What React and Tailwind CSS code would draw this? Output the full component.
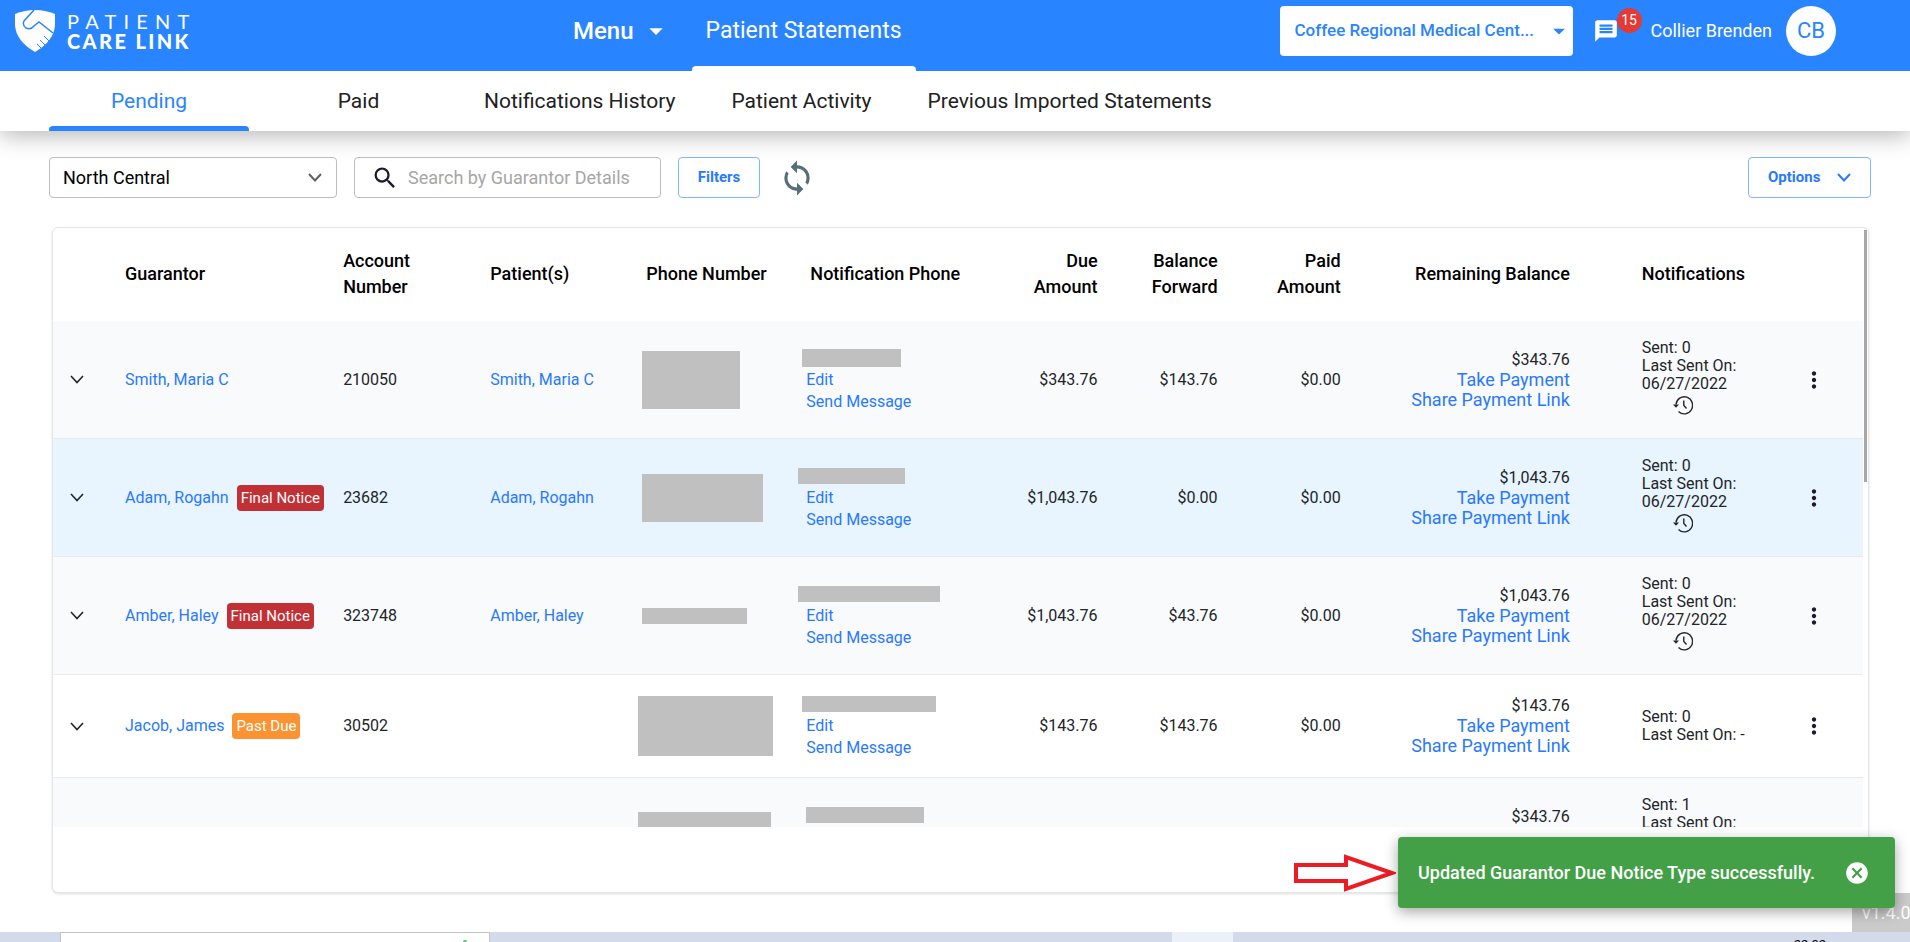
import { useState } from 'react';
import { MdArrowDropDown, MdCancel, MdMessage, MdMoreVert, MdSearch, MdSync } from 'react-icons/md';

const TABS = [
  { name: 'Pending', width: 'w-[200px]' },
  { name: 'Paid', width: 'ml-3 w-[195px]' },
  { name: 'Notifications History', width: 'px-7' },
  { name: 'Patient Activity', width: 'px-7' },
  { name: 'Previous Imported Statements', width: 'px-7' },
];

const ROWS = [
  {
    id: 1,
    guarantor: 'Smith, Maria C',
    account: '210050',
    patient: 'Smith, Maria C',
    phoneMask: 'w-[98px] h-[58px]',
    notifyMask: '-ml-1 w-[99px] h-[18px]',
    due: '$343.76',
    forward: '$143.76',
    paid: '$0.00',
    remaining: '$343.76',
    sent: 0,
    lastSent: '06/27/2022',
    rowClass: 'bg-[#f9fafc]',
  },
  {
    id: 2,
    guarantor: 'Adam, Rogahn',
    notice: 'Final Notice',
    account: '23682',
    patient: 'Adam, Rogahn',
    phoneMask: 'w-[121px] h-12',
    notifyMask: '-ml-2 w-[107px] h-4',
    due: '$1,043.76',
    forward: '$0.00',
    paid: '$0.00',
    remaining: '$1,043.76',
    sent: 0,
    lastSent: '06/27/2022',
    rowClass: 'bg-[#e8f4fe]',
  },
  {
    id: 3,
    guarantor: 'Amber, Haley',
    notice: 'Final Notice',
    account: '323748',
    patient: 'Amber, Haley',
    phoneMask: 'w-[105px] h-4',
    notifyMask: '-ml-2 w-[142px] h-4',
    due: '$1,043.76',
    forward: '$43.76',
    paid: '$0.00',
    remaining: '$1,043.76',
    sent: 0,
    lastSent: '06/27/2022',
    rowClass: 'bg-[#f9fafc]',
  },
  {
    id: 4,
    guarantor: 'Jacob, James',
    notice: 'Past Due',
    account: '30502',
    patient: '',
    phoneMask: '-ml-1 w-[135px] h-[60px]',
    notifyMask: '-ml-1 w-[134px] h-4',
    due: '$143.76',
    forward: '$143.76',
    paid: '$0.00',
    remaining: '$143.76',
    sent: 0,
    lastSent: null,
    rowClass: 'bg-white',
  },
  {
    id: 5,
    account: '',
    patient: '',
    phoneMask: '-ml-1 w-[133px] h-[50px]',
    notifyMask: 'w-[118px] h-4',
    due: '',
    forward: '',
    paid: '',
    remaining: '$343.76',
    sent: 1,
    lastSent: '06/27/2022',
    rowClass: 'bg-[#f9fafc]',
  },
];

function Logo() {
  return (
    <a href="#home" aria-label="Patient Care Link" className="flex items-center gap-3 text-white">
      <svg viewBox="0 0 40 42" className="h-[42px] w-10">
        <path d="M0 4 Q10 0 20 0 Q30 0 40 4 L40 15 Q39 31 20 42 Q1 31 0 15 Z" fill="#fff" />
        <path
          d="M19 0 L9 11 Q7 15 11 18 Q16 20 19 16 L24 12 L38 23"
          fill="none"
          stroke="#2984ff"
          strokeWidth="1.5"
        />
        <path d="M29 26 L34 31 M25 30 L30 35 M22 34 L26 38" stroke="#2984ff" strokeWidth="1" />
      </svg>
      <span className="flex flex-col whitespace-nowrap font-[Lato,sans-serif] text-xl leading-5">
        <span className="tracking-[0.36em]">PATIENT</span>
        <span className="font-black tracking-[0.12em]">CARE LINK</span>
      </span>
    </a>
  );
}

function Chevron({ className, strokeWidth = 2 }) {
  return (
    <svg viewBox="0 0 14 9" className={className} fill="none" stroke="currentColor" strokeWidth={strokeWidth}>
      <path d="M1 1 L7 7.5 L13 1" />
    </svg>
  );
}

function HistoryIcon() {
  return (
    <svg viewBox="0 0 20 20" className="size-5" fill="none" stroke="#212529" strokeWidth="1.4">
      <path d="M3 9.5 A8.3 8.6 0 1 1 5.5 16.5" />
      <path d="M10.8 5.5 V10.5 L13.5 13.5" />
      <path d="M0 9.5 H6 L3 12.8 Z" fill="#212529" stroke="none" />
    </svg>
  );
}

function TopBar() {
  return (
    <header className="relative z-10 flex h-[71px] bg-[#2984ff] text-white">
      <div className="w-[573px] shrink-0 pl-[15px] pt-[10px]">
        <Logo />
      </div>
      <nav className="flex">
        <button type="button" className="flex h-[61px] items-center gap-1.5 text-2xl font-medium">
          Menu
          <MdArrowDropDown className="size-8" />
        </button>
        <a href="#statements" className="ml-5 flex flex-col px-[14px] text-[23px]">
          <span className="flex h-[66px] items-center pb-1">Patient Statements</span>
          <span className="-mx-[14px] h-[5px] rounded-t bg-white" />
        </a>
      </nav>
      <div className="ml-auto flex h-[61px] items-center pr-[74px]">
        <div className="relative flex items-center text-[#2984ff]">
          <select
            aria-label="Facility"
            className="h-[50px] w-[293px] appearance-none rounded bg-white pl-[15px] pr-6 text-[17px] font-medium"
          >
            <option>Coffee Regional Medical Cent...</option>
          </select>
          <MdArrowDropDown className="pointer-events-none absolute right-0 size-7" />
        </div>
        <button type="button" aria-label="Messages" className="relative ml-5">
          <MdMessage className="size-[26px]" />
          <span className="absolute -top-2.5 left-6 flex size-[25px] items-center justify-center rounded-full bg-[#e53935] text-sm">
            15
          </span>
        </button>
        <span className="ml-8 text-lg">Collier Brenden</span>
        <button type="button" className="ml-[14px] size-[50px] rounded-full bg-white text-[22px] text-[#2984ff]">
          CB
        </button>
      </div>
    </header>
  );
}

function TabBar({ active, onChange }) {
  return (
    <nav className="relative flex h-[60px] bg-white pl-[49px] shadow-[0_4px_24px_rgba(0,0,0,0.3)]">
      {TABS.map(({ name, width }) => (
        <button
          key={name}
          type="button"
          onClick={() => onChange(name)}
          className={`flex flex-col items-center text-[21px] ${width} ${
            name === active ? 'text-[#2984ff]' : 'text-[#212121]'
          }`}
        >
          <span className="flex h-[60px] shrink-0 items-center pt-[2px]">{name}</span>
          {name === active && <span className="-mt-[5px] h-[5px] w-full shrink-0 rounded-t bg-[#2984ff]" />}
        </button>
      ))}
    </nav>
  );
}

function Toolbar() {
  return (
    <div className="flex items-center pl-[49px] pr-[39px] pt-[26px]">
      <div className="relative flex items-center">
        <select
          aria-label="Region"
          className="h-[41px] w-72 appearance-none rounded border border-[#bdbdbd] bg-white px-[13px] text-lg text-black"
        >
          <option>North Central</option>
        </select>
        <Chevron className="pointer-events-none absolute right-[15px] h-[9px] w-[14px] text-[#616161]" />
      </div>
      <div className="ml-[17px] flex h-[41px] w-[307px] items-center rounded border border-[#bdbdbd] bg-white pl-4 pr-7">
        <MdSearch className="size-7 shrink-0 text-[#1f1b2d]" />
        <input
          type="text"
          aria-label="Search"
          placeholder="Search by Guarantor Details"
          className="ml-[9px] min-w-0 flex-1 text-lg outline-none placeholder:text-[#a6a6a6]"
        />
      </div>
      <button
        type="button"
        className="ml-[17px] h-[41px] w-[82px] rounded border border-[#82b6ff] text-[15px] font-bold text-[#2979ff]"
      >
        Filters
      </button>
      <button type="button" aria-label="Refresh" className="ml-[18px]">
        <MdSync className="size-[38px] text-[#546e7a]" />
      </button>
      <button
        type="button"
        className="ml-auto flex h-[41px] w-[123px] items-center justify-between rounded border border-[#82b6ff] px-[19px] text-[15px] font-bold text-[#2979ff]"
      >
        Options
        <Chevron className="h-[9px] w-[14px]" />
      </button>
    </div>
  );
}

function NoticeBadge({ notice }) {
  return (
    <span
      className={`ml-2 rounded px-1 py-[3px] text-[15px] leading-5 text-white ${
        notice === 'Past Due' ? 'bg-[#fb9333]' : 'bg-[#c03035]'
      }`}
    >
      {notice}
    </span>
  );
}

function StatementRow({ row }) {
  return (
    <tr className={`border-b border-[#e8ebed] ${row.rowClass}`}>
      <td className="pl-[17px]">
        <button type="button" aria-label="Expand row" className="block">
          <Chevron className="h-[9px] w-[14px] text-[#212529]" strokeWidth={1.6} />
        </button>
      </td>
      <td className="whitespace-nowrap pl-4">
        <span className="flex items-center">
          <a href="#guarantor" className="text-[#2979ff]">
            {row.guarantor}
          </a>
          {row.notice && <NoticeBadge notice={row.notice} />}
        </span>
      </td>
      <td className="px-4">{row.account}</td>
      <td className="px-4">
        <a href="#patient" className="text-[#2979ff]">
          {row.patient}
        </a>
      </td>
      <td className="px-3">
        <div className={`bg-[#c0c0c0] ${row.phoneMask}`} />
      </td>
      <td className="px-3 py-[18px] leading-[22px]">
        <div className="flex h-[22px] items-center">
          <div className={`bg-[#c0c0c0] ${row.notifyMask}`} />
        </div>
        <a href="#edit" className="block text-[#2979ff]">
          Edit
        </a>
        <a href="#message" className="block text-[#2979ff]">
          Send Message
        </a>
      </td>
      <td className="px-4 text-right">{row.due}</td>
      <td className="px-4 text-right">{row.forward}</td>
      <td className="px-4 text-right">{row.paid}</td>
      <td className="px-4 text-right leading-5">
        <div>{row.remaining}</div>
        <a href="#pay" className="block text-lg leading-5 text-[#2979ff]">
          Take Payment
        </a>
        <a href="#share" className="block text-lg leading-5 text-[#2979ff]">
          Share Payment Link
        </a>
      </td>
      <td className="py-[18px] pl-14 leading-[18px]">
        <div>Sent: {row.sent}</div>
        <div>Last Sent On: {row.lastSent ? '' : '-'}</div>
        {row.lastSent && (
          <>
            <div>{row.lastSent}</div>
            <button type="button" aria-label="Notification history" className="ml-[31px] flex h-[27px] items-start pt-[2px]">
              <HistoryIcon />
            </button>
          </>
        )}
      </td>
      <td>
        <button type="button" aria-label="More actions" className="mx-auto block">
          <MdMoreVert className="size-[26px] text-[#1f1b2d]" />
        </button>
      </td>
    </tr>
  );
}

function StatementsTable() {
  return (
    <div className="ml-[52px] mr-[41px] mt-[29px] flex h-[666px] flex-col rounded-md border border-[#e6e6e6] bg-white shadow-sm">
      <div className="flex h-[599px] overflow-hidden">
        <div className="min-w-0 flex-1 overflow-hidden">
          <table className="w-full table-fixed text-base text-[#212529]">
            <thead className="h-[93px] text-lg leading-[26px] text-black">
              <tr>
                <th className="w-[56px]" aria-label="Expand" />
                <th className="w-[218px] px-4 pb-[2px] text-left font-medium">Guarantor</th>
                <th className="w-[147px] px-4 pb-[2px] text-left font-medium">Account Number</th>
                <th className="w-[156px] px-4 pb-[2px] text-left font-medium">Patient(s)</th>
                <th className="w-[164px] px-4 pb-[2px] text-left font-medium">Phone Number</th>
                <th className="w-[199px] px-4 pb-[2px] text-left font-medium">Notification Phone</th>
                <th className="w-[120px] px-4 pb-[2px] text-right font-medium">Due Amount</th>
                <th className="w-[120px] px-4 pb-[2px] text-right font-medium">Balance Forward</th>
                <th className="w-[123px] px-4 pb-[2px] text-right font-medium">Paid Amount</th>
                <th className="w-[229px] px-4 pb-[2px] text-right font-medium">Remaining Balance</th>
                <th className="w-[179px] pb-[2px] pl-14 text-left font-medium">Notifications</th>
                <th className="w-[98px]" aria-label="Actions" />
              </tr>
            </thead>
            <tbody>
              {ROWS.map((row) => (
                <StatementRow key={row.id} row={row} />
              ))}
            </tbody>
          </table>
        </div>
        <div className="w-[5px] px-[1px] pt-[2px]">
          <div className="h-[252px] bg-[#a8a8a8]" />
        </div>
      </div>
    </div>
  );
}

function Toast({ onClose }) {
  return (
    <div className="absolute bottom-[34px] right-[15px] flex items-center">
      <svg viewBox="0 0 102 38" className="mr-[2px] h-[38px] w-[102px]" fill="none" stroke="#ed1c24" strokeWidth="4">
        <path d="M2 11 H52 V3 L98 19 L52 35 V27 H2 Z" />
      </svg>
      <div
        role="status"
        className="flex h-[71px] w-[497px] items-center justify-between rounded bg-[#43a047] pl-5 pr-[25px] text-lg font-medium text-white shadow-[0_4px_14px_rgba(0,0,0,0.35)]"
      >
        Updated Guarantor Due Notice Type successfully.
        <button type="button" aria-label="Close" onClick={onClose}>
          <MdCancel className="size-[26px]" />
        </button>
      </div>
    </div>
  );
}

function Taskbar() {
  return (
    <footer className="flex h-[10px] overflow-hidden bg-[#d3dbea]">
      <div className="ml-[60px] flex w-[430px] items-end justify-end border border-b-0 border-[#c4c4c4] bg-white pr-[22px]">
        <span className="h-[2px] w-1 rounded-t bg-[#3ccf6b]" />
      </div>
      <div className="ml-[682px] w-[61px] bg-[#ecf0f8]" />
      <span className="ml-auto mr-[84px] pt-[5px] text-[13px] leading-4 text-black">22:02</span>
    </footer>
  );
}

export default function App() {
  const [tab, setTab] = useState('Pending');
  const [toastOpen, setToastOpen] = useState(true);

  return (
    <div className="relative flex min-h-screen flex-col overflow-hidden bg-white font-[Roboto,sans-serif]">
      <TopBar />
      <TabBar active={tab} onChange={setTab} />
      <main className="flex-1">
        <Toolbar />
        <StatementsTable />
      </main>
      <div className="absolute bottom-[10px] right-0 flex h-[39px] w-[58px] items-center bg-[#cbcbcb] pl-[10px] text-lg text-white">
        v1.4.0
      </div>
      <Taskbar />
      {toastOpen && <Toast onClose={() => setToastOpen(false)} />}
    </div>
  );
}
